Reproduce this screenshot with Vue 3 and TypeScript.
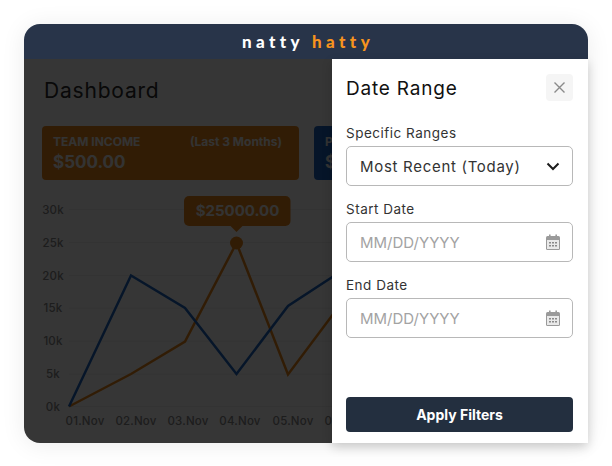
<script setup lang="ts">
import { ref } from 'vue'

const yTicks = [
  { label: '30k', y: 209.5 },
  { label: '25k', y: 242.5 },
  { label: '20k', y: 275.5 },
  { label: '15k', y: 308 },
  { label: '10k', y: 341 },
  { label: '5k', y: 374 },
  { label: '0k', y: 406.5 }
]
const xTicks = [
  { label: '01.Nov', x: 85 },
  { label: '02.Nov', x: 136 },
  { label: '03.Nov', x: 188 },
  { label: '04.Nov', x: 240 },
  { label: '05.Nov', x: 293 },
  { label: '06.Nov', x: 345 }
]
const bluePoints = '69,406.5 131,275.5 185,308 236.5,374 288,306 340,272'
const orangePoints = '69,406.5 131,374 185,341.5 236.5,243 288,374.5 340,305'

const range = ref('Most Recent (Today)')
</script>

<template>
  <div class="page">
    <div class="card">
      <header class="topbar">
        <span class="logo">natty <em>hatty</em></span>
      </header>

      <main class="dashboard">
        <h1>Dashboard</h1>
        <div class="stats">
          <div class="stat orange">
            <div class="stat-head"><span>TEAM INCOME</span><span>(Last 3 Months)</span></div>
            <div class="stat-value">$500.00</div>
          </div>
          <div class="stat navy">
            <div class="stat-head"><span>PERSONAL INCOME</span></div>
            <div class="stat-value">$250.00</div>
          </div>
        </div>

        <svg class="chart" width="358" height="240" viewBox="42 196 358 240">
          <g v-for="t in yTicks" :key="t.label">
            <line x1="69" x2="400" :y1="t.y" :y2="t.y" class="grid" />
            <text x="53" :y="t.y + 4" text-anchor="middle" class="tick">{{ t.label }}</text>
          </g>
          <text v-for="t in xTicks" :key="t.label" :x="t.x" y="425" text-anchor="middle" class="tick">{{ t.label }}</text>
          <polyline :points="orangePoints" class="line line-orange" />
          <polyline :points="bluePoints" class="line line-blue" />
          <circle cx="236.5" cy="243" r="6.5" fill="#e8861a" />
          <rect x="184" y="196" width="106.5" height="30" rx="5" fill="#e8861a" />
          <path d="M230.5 226h12l-6 6z" fill="#e8861a" />
          <text x="237.5" y="216" text-anchor="middle" class="tip">$25000.00</text>
        </svg>
      </main>

      <div class="overlay"></div>

      <aside class="drawer">
        <div class="drawer-head">
          <h2>Date Range</h2>
          <button class="close" type="button" aria-label="Close">
            <svg width="13" height="13" viewBox="0 0 13 13">
              <path d="M1.5 1.5l10 10M11.5 1.5l-10 10" stroke="#8a8a8a" stroke-width="1.4" fill="none" />
            </svg>
          </button>
        </div>

        <label class="field-label">Specific Ranges</label>
        <div class="control">
          <span class="value">{{ range }}</span>
          <svg width="14" height="9" viewBox="0 0 14 9">
            <path d="M1.5 1.5L7 7l5.5-5.5" stroke="#1c1c1c" stroke-width="2" fill="none" />
          </svg>
        </div>

        <label class="field-label">Start Date</label>
        <div class="control">
          <input type="text" placeholder="MM/DD/YYYY" />
          <svg class="cal" width="14" height="16" viewBox="0 0 14 16">
            <path d="M3 0.5h1.6v2H3zM9.4 0.5H11v2H9.4z" fill="#9a9a9a" />
            <rect y="2" width="14" height="14" rx="1.5" fill="#9a9a9a" />
            <rect x="1" y="6" width="12" height="9" fill="#e9e9e9" />
            <path d="M3 8h2v1.5H3zM6 8h2v1.5H6zM9 8h2v1.5H9zM3 11h2v1.5H3zM6 11h2v1.5H6zM9 11h2v1.5H9z" fill="#8a8a8a" />
          </svg>
        </div>

        <label class="field-label">End Date</label>
        <div class="control">
          <input type="text" placeholder="MM/DD/YYYY" />
          <svg class="cal" width="14" height="16" viewBox="0 0 14 16">
            <path d="M3 0.5h1.6v2H3zM9.4 0.5H11v2H9.4z" fill="#9a9a9a" />
            <rect y="2" width="14" height="14" rx="1.5" fill="#9a9a9a" />
            <rect x="1" y="6" width="12" height="9" fill="#e9e9e9" />
            <path d="M3 8h2v1.5H3zM6 8h2v1.5H6zM9 8h2v1.5H9zM3 11h2v1.5H3zM6 11h2v1.5H6zM9 11h2v1.5H9z" fill="#8a8a8a" />
          </svg>
        </div>

        <button class="apply" type="button">Apply Filters</button>
      </aside>
    </div>
  </div>
</template>

<style>
html,
body {
  background: #fff;
}
</style>

<style scoped>
.page {
  width: 612px;
  height: 466px;
  padding: 24px;
  box-sizing: border-box;
  font-family: Inter, "Open Sans", sans-serif;
}

.card {
  position: relative;
  height: 419px;
  display: flex;
  flex-direction: column;
  border-radius: 16px;
  box-shadow: 0 2px 24px rgba(0, 0, 0, 0.08);
}

.topbar {
  height: 35px;
  flex: none;
  display: flex;
  align-items: center;
  justify-content: center;
  background: #283449;
  border-radius: 16px 16px 0 0;
}

.logo {
  padding-left: 4px;
  font-family: Lato, sans-serif;
  font-weight: 900;
  font-size: 17px;
  letter-spacing: 4.4px;
  color: #fff;
}

.logo em {
  font-style: normal;
  color: #f7931e;
}

.dashboard {
  flex: 1;
  overflow: hidden;
  padding: 18px 0 0 18px;
  background: #fff;
  border-radius: 0 0 0 16px;
}

h1 {
  margin: 0 0 21px 2px;
  font-size: 21px;
  line-height: 28px;
  font-weight: 400;
  letter-spacing: 0.8px;
  color: #2b2b2b;
}

.stats {
  display: flex;
  gap: 15px;
  width: 560px;
}

.stat {
  flex: none;
  width: 257px;
  height: 54px;
  padding: 9px 17px 9px 11px;
  box-sizing: border-box;
  border-radius: 4px;
  color: #f2f2f2;
}

.orange {
  background: #e8861a;
}

.navy {
  background: #1d66c0;
}

.stat-head {
  display: flex;
  justify-content: space-between;
  font-size: 12px;
  line-height: 14px;
  font-weight: 700;
}

.stat-value {
  margin-top: 2px;
  font-size: 17px;
  line-height: 22px;
  font-weight: 700;
}

.chart {
  display: block;
  margin: 16px 0 0 0;
}

.grid {
  stroke: #eee;
  stroke-width: 1;
}

.tick {
  font-size: 11.5px;
  font-weight: 500;
  letter-spacing: 0.2px;
  fill: #888;
}

.tip {
  font-size: 15px;
  font-weight: 700;
  fill: #f2f2f2;
}

.line {
  fill: none;
  stroke-width: 2.5;
}

.line-orange {
  stroke: #e8861a;
}

.line-blue {
  stroke: #1d66c0;
}

.overlay {
  position: absolute;
  top: 35px;
  left: 0;
  right: 0;
  bottom: 0;
  background: rgba(0, 0, 0, 0.79);
  border-radius: 0 0 16px 16px;
}

.drawer {
  position: absolute;
  top: 35px;
  right: 0;
  bottom: 0;
  width: 256px;
  padding: 15px 15px 11px 14px;
  box-sizing: border-box;
  display: flex;
  flex-direction: column;
  background: #fff;
  box-shadow: 0 4px 10px rgba(0, 0, 0, 0.18);
}

.drawer-head {
  display: flex;
  align-items: center;
  justify-content: space-between;
  height: 27px;
  margin-bottom: 24px;
}

h2 {
  margin: 2px 0 0;
  font-size: 19px;
  font-weight: 400;
  letter-spacing: 0.8px;
  color: #111;
}

.close {
  width: 27px;
  height: 27px;
  padding: 0;
  display: flex;
  align-items: center;
  justify-content: center;
  background: #f5f5f5;
  border: none;
  border-radius: 4px;
}

.field-label {
  display: block;
  font-size: 13.5px;
  line-height: 17px;
  letter-spacing: 0.5px;
  color: #333;
  margin-bottom: 4px;
}

.control {
  height: 40px;
  flex: none;
  box-sizing: border-box;
  display: flex;
  align-items: center;
  justify-content: space-between;
  padding: 0 12px 0 13px;
  border: 1px solid #b8b8b8;
  border-radius: 5px;
  margin-bottom: 15px;
}

.value {
  font-size: 15px;
  letter-spacing: 0.7px;
  color: #333;
}

input {
  width: 170px;
  padding: 0;
  border: none;
  outline: none;
  font: inherit;
  font-size: 15px;
  background: transparent;
}

input::placeholder {
  color: #a3a3a3;
  opacity: 1;
}

.apply {
  margin-top: auto;
  height: 35px;
  flex: none;
  border: none;
  border-radius: 4px;
  background: #232f3f;
  color: #fff;
  font: inherit;
  font-size: 14px;
  font-weight: 700;
}
</style>
